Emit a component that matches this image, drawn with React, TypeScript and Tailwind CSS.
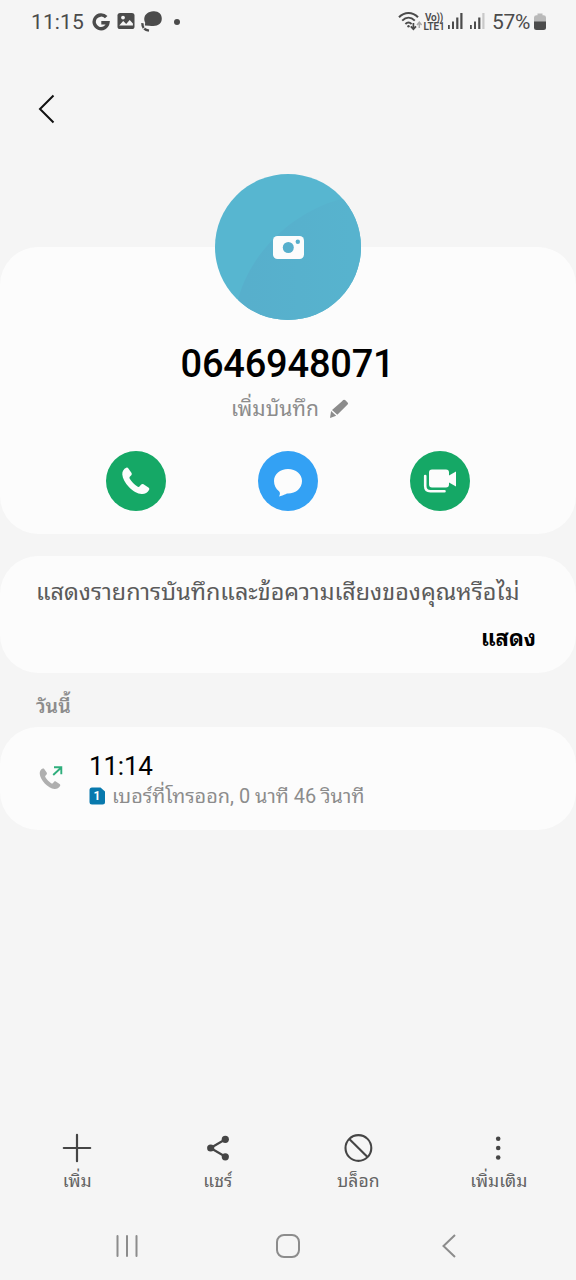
import type { ReactNode } from "react";

interface CircleButtonProps {
  label: string;
  className: string;
  children: ReactNode;
}

interface ToolbarItemProps {
  label: string;
  children: ReactNode;
}

const PHONE_PATH =
  "M6.2 1.2 9.4 5.8C10 6.7 9.9 7.6 9.3 8.2L7.8 9.8C7.3 10.4 7.3 11 7.6 11.6 9.4 14.8 12.3 17.8 15.8 19.8 16.4 20.1 17 20 17.5 19.5L19.2 17.6C19.9 16.9 20.7 16.8 21.5 17.3L26.4 20.6C27.4 21.3 27.6 22.2 27 23.1 25.5 25.8 22.8 27.2 19.6 27 15.6 26.7 10.7 23.8 6.9 19.9 3.2 16.1.5 11.3.3 7.5.1 4.4 1.6 2 4.3.8 5 .4 5.7.5 6.2 1.2Z";

function StatusBar() {
  return (
    <header className="flex h-11 items-center pl-[31px] pr-[30px] text-[#4b4b4b]">
      <span className="w-[53px] text-[21px] leading-[44px] tracking-[0.1px]">11:15</span>
      <svg className="ml-[8px] h-[18px] w-[18px]" viewBox="0 0 18 18" fill="none">
        <path d="M14.2 4.2A6.9 6.9 0 1 0 15.9 9.8H9.3" stroke="currentColor" strokeWidth="3.4" />
      </svg>
      <svg className="ml-[7px] h-[18px] w-[18px]" viewBox="0 0 18 18">
        <rect x="0.5" y="0" width="17" height="16" rx="2.6" fill="currentColor" />
        <path d="M2.2 12.4 6.2 7.9 9.2 11.1 12.7 6.9 15.9 10.6V12.4Z" fill="#f5f5f5" />
        <circle cx="6" cy="4.6" r="1.9" fill="#f5f5f5" />
      </svg>
      <svg className="ml-[6px] h-[22px] w-[22px]" viewBox="0 0 22 22" fill="none">
        <path
          d="M12.2 0.2C17.3-.2 20.8 2.8 20.8 7.6S17.5 15 12.3 15.1C10.8 15.1 9.6 14.8 8.3 14.8L3.8 14.5 4.2 11.8C3.4 10.4 3.1 9.1 3.3 7.3 3.7 3.3 7.2 .6 12.2 .2Z"
          fill="currentColor"
        />
        <path d="M1.4 12.1C1.2 16.3 3 18.8 8 19.6" stroke="currentColor" strokeWidth="2.4" strokeDasharray="5.2 .8" />
      </svg>
      <span className="mb-px ml-[11px] size-[6px] rounded-full bg-[#4b4b4b]" />

      <div className="ml-auto flex items-center">
        <svg className="-ml-px mb-[2px] mr-px h-5 w-[25px]" viewBox="0 0 25 20" fill="none" stroke="currentColor" strokeWidth="2">
          <path d="M1 6.2C6.5.5 14.5.5 20 6.2M4.2 9.6C8.1 5.8 12.9 5.8 16.8 9.6M7.4 12.9C9.2 11.3 11.8 11.3 13.6 12.9" />
          <circle cx="10.5" cy="15.3" r="1.2" fill="currentColor" stroke="none" />
          <path d="M15.4 12V18M12.8 15.4 15.4 18.2 18 15.4" strokeWidth="1.7" />
          <path d="M21.3 17V11.5M19 13.9 21.3 11.2 23.6 13.9" stroke="#aaa" strokeWidth="1.5" />
        </svg>
        <span className="mb-px flex w-[20px] flex-col items-center whitespace-nowrap text-[10px] font-semibold leading-[9px] tracking-[-0.2px]">
          <span>Vo))</span>
          <span>LTE1</span>
        </span>
        <svg className="ml-[4px] h-[18px] w-[15px]" viewBox="0 0 15 18" fill="currentColor">
          <rect x="0" y="12" width="1.8" height="4" />
          <rect x="4" y="8.5" width="2" height="7.5" />
          <rect x="8.2" y="4.5" width="2.2" height="11.5" />
          <rect x="12.3" y="0" width="2.2" height="16" />
        </svg>
        <svg className="ml-[7px] h-[18px] w-[15px]" viewBox="0 0 15 18" fill="currentColor">
          <rect x="0" y="12" width="1.8" height="4" />
          <rect x="4" y="8.5" width="2" height="7.5" />
          <rect x="8.2" y="4.5" width="2.2" height="11.5" />
          <rect x="12.3" y="0" width="2.2" height="16" fill="#c9c9c9" />
        </svg>
        <span className="ml-[7px] w-[39px] text-[21px] leading-[44px] tracking-[-0.3px]">57%</span>
        <svg className="mb-px ml-[3px] h-[18px] w-[12px]" viewBox="0 0 12 18">
          <path d="M3.5 0.5H8.5V2.2H9.5Q12 2.2 12 4.5V9H0V4.5Q0 2.2 2.5 2.2H3.5Z" fill="#b9b9b9" />
          <path d="M0 8.5H12V14.5Q12 17 9.5 17H2.5Q0 17 0 14.5Z" fill="currentColor" />
        </svg>
      </div>
    </header>
  );
}

function Avatar() {
  return (
    <svg className="mt-[-73px] size-[146px] shrink-0" viewBox="0 0 146 146">
      <defs>
        <clipPath id="avatar-clip">
          <circle cx="73" cy="73" r="73" />
        </clipPath>
        <linearGradient id="avatar-shade" x1="0" y1="0" x2="1" y2="0">
          <stop offset="0.1" stopColor="#57afcc" />
          <stop offset="0.9" stopColor="#57b3ce" />
        </linearGradient>
      </defs>
      <g clipPath="url(#avatar-clip)">
        <rect width="146" height="146" fill="#57b6d0" />
        <path d="M22 130C32 84 72 40 126 25L150 22V150H18Z" fill="url(#avatar-shade)" />
      </g>
      <rect x="58" y="62" width="31" height="23" rx="4.5" fill="#fcfcfc" />
      <circle cx="73.3" cy="73.5" r="5.5" fill="#57afcc" />
      <circle cx="82.8" cy="67.8" r="2.2" fill="#57afcc" />
    </svg>
  );
}

function CircleButton({ label, className, children }: CircleButtonProps) {
  return (
    <button
      type="button"
      aria-label={label}
      className={`flex size-[60px] items-center justify-center rounded-full ${className}`}
    >
      {children}
    </button>
  );
}

function ToolbarItem({ label, children }: ToolbarItemProps) {
  return (
    <button type="button" className="flex flex-col items-center text-[#454545]">
      <svg className="h-[30px] w-[30px]" viewBox="0 0 30 30" fill="none" stroke="currentColor">
        {children}
      </svg>
      <span className="mt-[4px] whitespace-nowrap text-[17.5px] leading-7 text-[#636363]">{label}</span>
    </button>
  );
}

export default function App() {
  return (
    <div className="flex h-[1280px] w-[576px] flex-col overflow-hidden bg-[#f5f5f5] font-[Roboto,'Noto_Sans_Thai_Looped',Loma,'Noto_Sans',sans-serif]">
      <StatusBar />

      <div className="flex h-[203px] shrink-0 items-start pl-[38px] pt-[50px]">
        <svg className="h-[30px] w-[18px]" viewBox="0 0 18 30" fill="none" stroke="#111" strokeWidth="2">
          <path d="M15.5 1.5 2 15 15.5 28.5" />
        </svg>
      </div>

      <section className="flex h-[287px] shrink-0 flex-col items-center rounded-[38px] bg-[#fcfcfc]">
        <Avatar />
        <h1 className="mt-[20px] pr-px text-[38px] font-medium leading-[48px] tracking-[-0.2px] text-black">
          0646948071
        </h1>
        <div className="mt-[2px] flex h-[38px] items-center pl-1 text-[#8c8c8c]">
          <span className="text-[21px] leading-[38px]">เพิ่มบันทึก</span>
          <svg className="mb-px ml-[10px] h-5 w-5" viewBox="0 0 20 20" fill="currentColor">
            <path d="M12.5 2.7 14.2 1.1Q15.3 0.2 16.4 1.2L18.6 3.4Q19.6 4.5 18.6 5.6L8.3 15.8 3 10.9ZM2.1 12.1 7.2 16.8 1 19Z" />
          </svg>
        </div>
        <div className="mt-[23px] flex gap-[92px] pr-px">
          <CircleButton label="โทร" className="bg-[#15a866]">
            <svg className="h-7 w-7" viewBox="0 0 28 28" fill="#fcfcfc">
              <path d={PHONE_PATH} />
            </svg>
          </CircleButton>
          <CircleButton label="ข้อความ" className="bg-[#33a1f4]">
            <svg className="mt-[3px] h-7 w-7" viewBox="0 0 28 28" fill="#fcfcfc">
              <path d="M14 0C22 0 28 5 28 12S22 24.5 14 24.5C11.7 24.5 10.5 26.3 5 27.5 6.3 25.3 6.2 23.5 5 22.2 1.8 19.8 0 16 0 12 0 5 6 0 14 0Z" />
            </svg>
          </CircleButton>
          <CircleButton label="วิดีโอ" className="bg-[#15a866]">
            <svg className="h-6 w-[34px]" viewBox="0 0 34 24" fill="#fcfcfc">
              <path d="M9 0.5H23Q26 .5 26 3.5V6.5L33 2.5V17.5L26 13.5V15.5Q26 18.5 23 18.5H9Q6 18.5 6 15.5V3.5Q6 .5 9 .5Z" />
              <path d="M2.2 7V17Q2.2 22.2 7.4 22.2H21.5" fill="none" stroke="#fcfcfc" strokeWidth="2.6" strokeLinecap="round" />
            </svg>
          </CircleButton>
        </div>
      </section>

      <section className="mt-[22px] flex h-[117px] shrink-0 flex-col rounded-[38px] bg-[#fcfcfc] pl-9 pr-10 pt-[17px]">
        <p className="whitespace-nowrap text-[23.35px] leading-[38px] text-[#5a5a5a]">
          แสดงรายการบันทึกและข้อความเสียงของคุณหรือไม่
        </p>
        <button type="button" className="mt-[10px] self-end text-[22px] font-bold leading-[36px] text-black">
          แสดง
        </button>
      </section>

      <h2 className="h-[54px] shrink-0 pl-9 pt-[17px] text-[19.5px] font-semibold leading-[34px] text-[#8c8c8c]">วันนี้</h2>

      <section className="flex h-[103px] shrink-0 rounded-[38px] bg-[#fcfcfc] pl-[39px]">
        <svg className="mt-[38px] h-[26px] w-6" viewBox="0 0 24 26" fill="none">
          <g transform="translate(0.5 3) scale(0.76 0.78)">
            <path d={PHONE_PATH} fill="#afafaf" />
          </g>
          <path d="M14.2 10 22 2.7M15 2.2H22.3V9.2" stroke="#2fae7c" strokeWidth="1.9" />
        </svg>
        <div className="ml-[26px] flex flex-col">
          <span className="mt-[22px] text-[26px] leading-[34px] tracking-[-0.2px] text-black">11:14</span>
          <div className="flex h-[27px] items-center">
            <svg className="mb-[2px] h-[18px] w-4" viewBox="0 0 16 18">
              <path d="M3 .5H11.5L16 4.5V15Q16 17.5 13.5 17.5H3Q.5 17.5 .5 15V3Q.5 .5 3 .5Z" fill="#0879ad" />
              <text x="8" y="13.2" textAnchor="middle" fontSize="12" fontWeight="700" fill="#fff">
                1
              </text>
            </svg>
            <span className="ml-[7px] whitespace-nowrap text-[19.9px] leading-[27px] text-[#8c8c8c]">
              เบอร์ที่โทรออก, 0 นาที 46 วินาที
            </span>
          </div>
        </div>
      </section>

      <nav className="mt-auto grid h-[79px] shrink-0 grid-cols-4 px-[7px]">
        <ToolbarItem label="เพิ่ม">
          <path d="M15 1.8V28.2M1.8 15H28.2" strokeWidth="2.2" strokeLinecap="round" />
        </ToolbarItem>
        <ToolbarItem label="แชร์">
          <path d="M22.5 6.3 7.5 15 22.5 23.8" strokeWidth="2.2" />
          <g fill="currentColor" stroke="none">
            <circle cx="22.3" cy="6.3" r="3.6" />
            <circle cx="7.7" cy="15" r="3.6" />
            <circle cx="22.3" cy="23.8" r="3.6" />
          </g>
        </ToolbarItem>
        <ToolbarItem label="บล็อก">
          <circle cx="15.4" cy="15" r="12.9" strokeWidth="2.1" />
          <path d="M6.3 5.9 24.5 24.1" strokeWidth="2.1" />
        </ToolbarItem>
        <ToolbarItem label="เพิ่มเติม">
          <g fill="currentColor" stroke="none">
            <circle cx="14.2" cy="5.8" r="2.3" />
            <circle cx="14.2" cy="15" r="2.3" />
            <circle cx="14.2" cy="24.5" r="2.3" />
          </g>
        </ToolbarItem>
      </nav>

      <footer className="grid h-[68px] shrink-0 grid-cols-3 items-center justify-items-center px-[46px]">
        <svg className="h-6 w-6" viewBox="0 0 24 24" stroke="#8c8c8c" strokeWidth="2" strokeLinecap="round">
          <path d="M2.5 2V22M12 2V22M21.5 2V22" />
        </svg>
        <svg className="h-6 w-6" viewBox="0 0 24 24" fill="none" stroke="#8c8c8c" strokeWidth="2">
          <rect x="1" y="1" width="22" height="22" rx="7" />
        </svg>
        <svg className="h-6 w-4" viewBox="0 0 16 24" fill="none" stroke="#8c8c8c" strokeWidth="2">
          <path d="M14 1 2.5 12 14 23" />
        </svg>
      </footer>
    </div>
  );
}
